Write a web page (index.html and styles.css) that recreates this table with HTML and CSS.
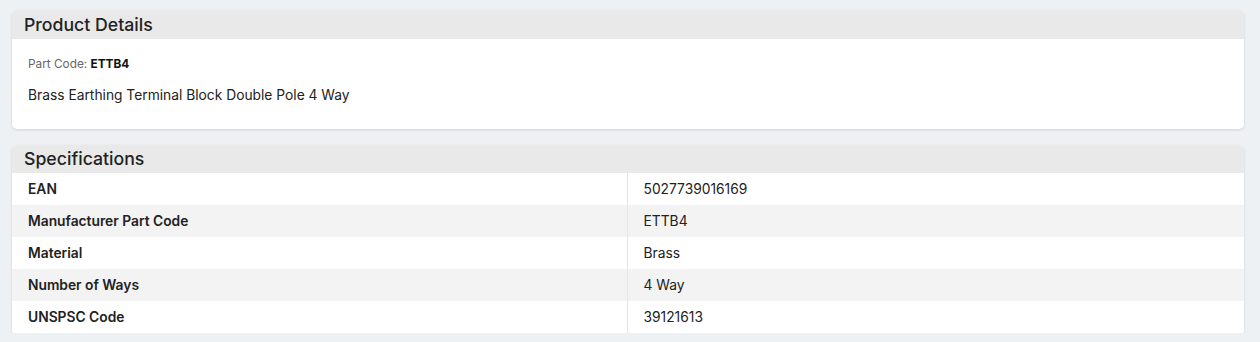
FILE: index.html
```html
<!DOCTYPE html>
<html>
<head>
<meta charset="utf-8">
<link rel="stylesheet" href="styles.css">
</head>
<body>
<div class="page">
  <section class="card card-details">
    <h2 class="card-title">Product Details</h2>
    <div class="card-body">
      <div class="part-code">Part Code: <strong>ETTB4</strong></div>
      <p class="description">Brass Earthing Terminal Block Double Pole 4 Way</p>
    </div>
  </section>
  <section class="card card-specs">
    <h2 class="card-title">Specifications</h2>
    <table class="spec-table">
      <tr><th>EAN</th><td>5027739016169</td></tr>
      <tr><th>Manufacturer Part Code</th><td>ETTB4</td></tr>
      <tr><th>Material</th><td>Brass</td></tr>
      <tr><th>Number of Ways</th><td>4 Way</td></tr>
      <tr><th>UNSPSC Code</th><td>39121613</td></tr>
    </table>
  </section>
</div>
</body>
</html>
```
FILE: styles.css
```css
html, body {
  margin: 0;
  padding: 0;
  background: #eef1f4;
  font-family: Inter, "Noto Sans", sans-serif;
  color: #222;
}
.page {
  padding: 10px 16px 0 12px;
  display: flex;
  flex-direction: column;
  gap: 16px;
}
.card {
  background: #fff;
  border-radius: 5px;
  box-shadow: 0 1px 3px rgba(0,0,0,0.12);
  overflow: hidden;
}
.card-title {
  margin: 0;
  background: #e9e9e9;
  height: 29px;
  line-height: 30px;
  padding: 0 12px;
  font-size: 17.7px;
  font-weight: 500;
  color: #222;
}
.card-specs .card-title {
  height: 28px;
  line-height: 28px;
}
.card-specs {
  border-radius: 5px 5px 2px 2px;
}
.card-body {
  padding: 17px 16px 24px 16px;
}
.part-code {
  font-size: 11.8px;
  line-height: 16px;
  color: #666;
}
.part-code strong {
  color: #111;
  font-weight: 700;
}
.description {
  margin: 13px 0 0;
  font-size: 13.8px;
  line-height: 20px;
  color: #222;
}
.spec-table {
  width: 100%;
  border-collapse: collapse;
  table-layout: fixed;
  font-size: 13.8px;
}
.spec-table th, .spec-table td {
  height: 32px;
  padding: 0 16px;
  text-align: left;
  color: #222;
}
.spec-table th {
  width: 615px;
  box-sizing: border-box;
  font-weight: 600;
  border-right: 1px solid #e6e6e6;
}
.spec-table td {
  font-weight: 400;
}
.spec-table tr:nth-child(even) {
  background: #f3f3f3;
}
```
